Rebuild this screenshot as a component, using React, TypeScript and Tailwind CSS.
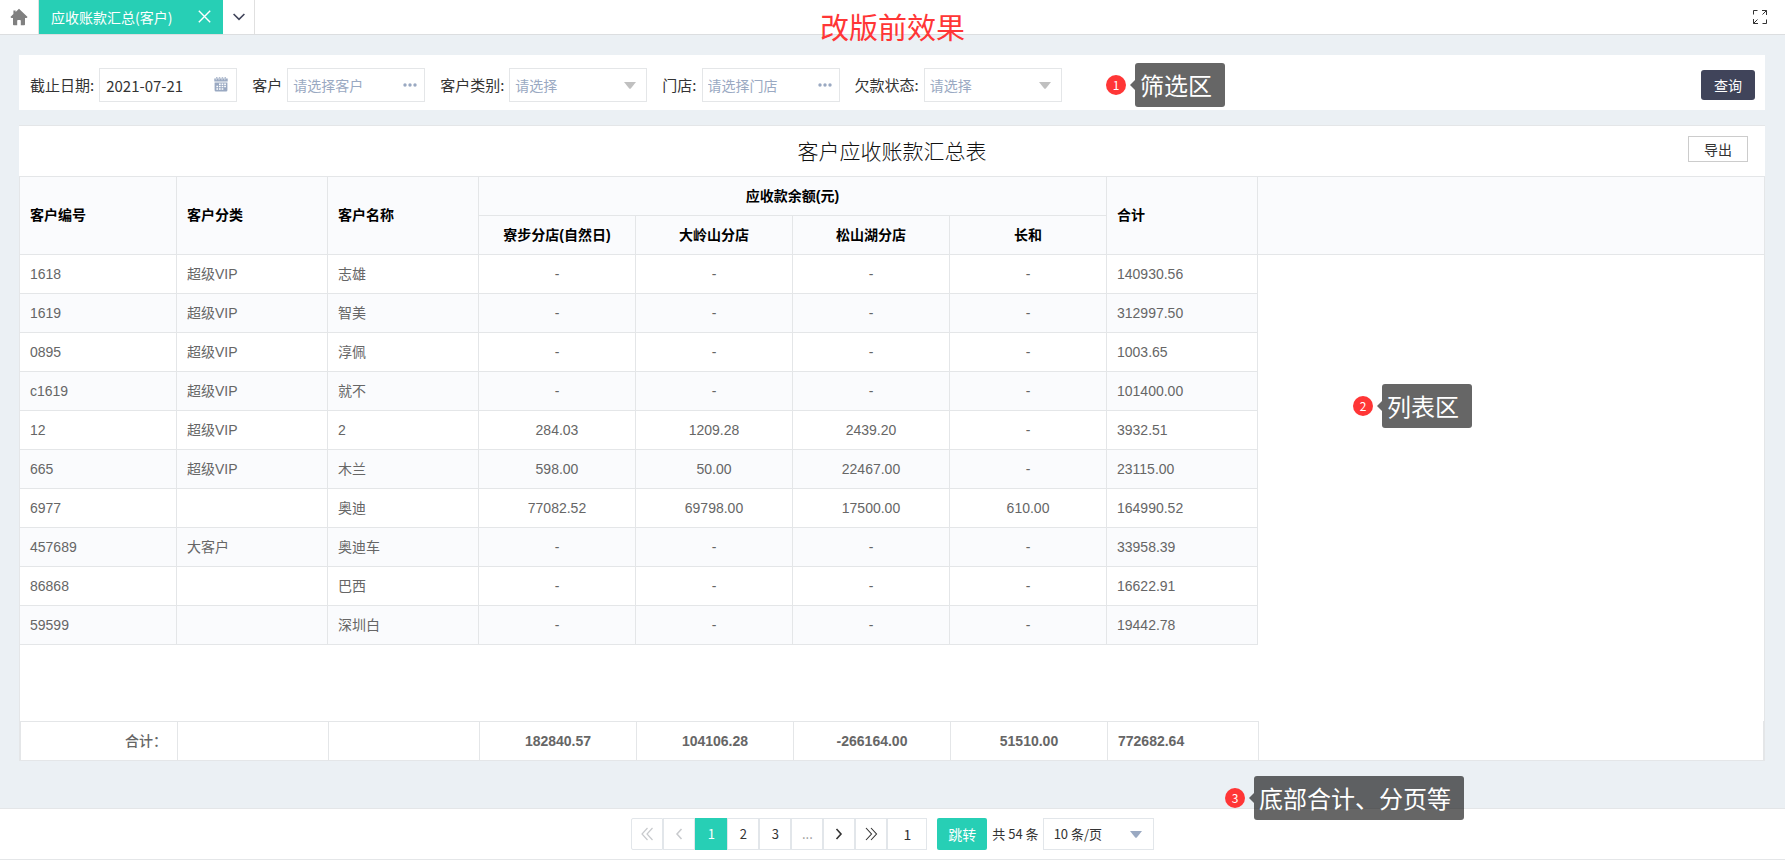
import { useState } from 'react';

type Row = {
    code: string;
    category: string;
    name: string;
    stores: string[];
    total: string;
};

const STORES = ['寮步分店(自然日)', '大岭山分店', '松山湖分店', '长和'];

const ROWS: Row[] = [
    { code: '1618', category: '超级VIP', name: '志雄', stores: ['-', '-', '-', '-'], total: '140930.56' },
    { code: '1619', category: '超级VIP', name: '智美', stores: ['-', '-', '-', '-'], total: '312997.50' },
    { code: '0895', category: '超级VIP', name: '淳佩', stores: ['-', '-', '-', '-'], total: '1003.65' },
    { code: 'c1619', category: '超级VIP', name: '就不', stores: ['-', '-', '-', '-'], total: '101400.00' },
    { code: '12', category: '超级VIP', name: '2', stores: ['284.03', '1209.28', '2439.20', '-'], total: '3932.51' },
    { code: '665', category: '超级VIP', name: '木兰', stores: ['598.00', '50.00', '22467.00', '-'], total: '23115.00' },
    { code: '6977', category: '', name: '奥迪', stores: ['77082.52', '69798.00', '17500.00', '610.00'], total: '164990.52' },
    { code: '457689', category: '大客户', name: '奥迪车', stores: ['-', '-', '-', '-'], total: '33958.39' },
    { code: '86868', category: '', name: '巴西', stores: ['-', '-', '-', '-'], total: '16622.91' },
    { code: '59599', category: '', name: '深圳白', stores: ['-', '-', '-', '-'], total: '19442.78' },
];

const STORE_TOTALS = ['182840.57', '104106.28', '-266164.00', '51510.00'];

function HomeIcon() {
    return (
        <svg viewBox="0 0 18 18" className="h-[18px] w-[18px] fill-[#808080]">
            <path d="M9 .8 17.6 9l-1 1.1H15v6.3q0 .8-.8.8h-3.4v-4.4q0-.8-.8-.8H8q-.8 0-.8.8v4.4H3.8q-.8 0-.8-.8v-6.3H1.4L.4 9l3-2.9V2.6h2.2V4z" />
        </svg>
    );
}

function CalendarIcon() {
    return (
        <svg viewBox="0 0 14 15" className="pointer-events-none absolute top-[9px] right-[9px] h-[15px] w-[14px]">
            <path d="M.3 1.6h13.4v3H.3zM.6 5.4h12.8v7.8q0 1.3-1.3 1.3H1.9Q.6 14.5.6 13.2z" fill="#9aa9c2" />
            <path d="M2 .3h1.5v1.3H2zM4.8.3h1.5v1.3H4.8zM7.7.3h1.5v1.3H7.7zM10.5.3H12v1.3h-1.5z" fill="#9aa9c2" />
            <path d="M2.2 1.6v1.6M5 1.6v1.6M8 1.6v1.6M10.8 1.6v1.6" stroke="#fff" strokeWidth=".6" />
            <path d="M5 6.4h1.7v1.5H5zM7.6 6.4h1.7v1.5H7.6zM10.2 6.4h1.7v1.5h-1.7zM2.4 8.8h1.7v1.5H2.4zM5 8.8h1.7v1.5H5zM7.6 8.8h1.7v1.5H7.6zM10.2 8.8h1.7v1.5h-1.7zM2.4 11.2h1.7v1.5H2.4zM5 11.2h1.7v1.5H5zM7.6 11.2h1.7v1.5H7.6z" fill="#fff" />
        </svg>
    );
}

function DotsIcon() {
    return (
        <svg viewBox="0 0 14 4" className="pointer-events-none absolute top-[15px] right-2 h-1 w-[14px] fill-[#9aa9c2]">
            <circle cx="2" cy="2" r="1.7" />
            <circle cx="7" cy="2" r="1.7" />
            <circle cx="12" cy="2" r="1.7" />
        </svg>
    );
}

function CaretIcon({ className }: { className: string }) {
    return (
        <svg viewBox="0 0 12 7" className={`pointer-events-none absolute h-[7px] w-3 ${className}`}>
            <path d="M0 0h12L7 6.2q-1 1-2 0z" />
        </svg>
    );
}

function Chevrons({ d, width }: { d: string; width: number }) {
    return (
        <svg viewBox="0 0 14 14" className="h-[14px] w-[14px]" fill="none" stroke="currentColor" strokeWidth={width}>
            <path d={d} />
        </svg>
    );
}

function PickerField({ id, label, placeholder }: { id: string; label: string; placeholder: string }) {
    return (
        <div className="flex items-center gap-[5px]">
            <label htmlFor={id}>{label}</label>
            <div className="relative">
                <input
                    id={id}
                    placeholder={placeholder}
                    className="block h-[34px] w-[138px] border border-[#e4e6e8] bg-white pr-6 pl-[5px] text-sm outline-none placeholder:text-[#9aa9c2]"
                />
                <DotsIcon />
            </div>
        </div>
    );
}

function SelectField({ id, label }: { id: string; label: string }) {
    return (
        <div className="flex items-center gap-[5px]">
            <label htmlFor={id}>{label}</label>
            <div className="relative">
                <select
                    id={id}
                    className="block h-[34px] w-[138px] appearance-none border border-[#e4e6e8] bg-white pr-6 pl-[5px] text-sm text-[#9aa9c2] outline-none"
                >
                    <option>请选择</option>
                </select>
                <CaretIcon className="top-[14px] right-[11px] fill-[#c0c0c0]" />
            </div>
        </div>
    );
}

function Columns() {
    return (
        <colgroup>
            <col className="w-[157px]" />
            <col className="w-[151px]" />
            <col className="w-[151px]" />
            {STORES.map((s) => (
                <col key={s} className="w-[157px]" />
            ))}
            <col className="w-[151px]" />
            <col />
        </colgroup>
    );
}

function Callout({ n, text, className }: { n: number; text: string; className: string }) {
    return (
        <div className={`absolute flex items-center ${className}`}>
            <span className="flex h-5 w-5 items-center justify-center rounded-full bg-[#ff3636] text-xs text-white">{n}</span>
            <svg viewBox="0 0 5 10" className="ml-1 h-[10px] w-[5px] fill-black/60">
                <path d="M5 0v10L0 5z" />
            </svg>
            <span className="flex h-11 items-center rounded-[3px] bg-black/60 pr-[13px] pb-px pl-[5px] text-2xl whitespace-nowrap text-white">
                {text}
            </span>
        </div>
    );
}

const th = 'h-[39px] border-r border-b border-[#e4e6e8] bg-[#fafbfd] px-[10px] pb-px font-bold text-black';
const td = 'h-[39px] border-r border-b border-[#e4e6e8] px-[10px] pb-px';
const tf = 'h-[39px] border-t border-r border-[#e4e6e8] px-[10px] pb-px';
const pageBtn = 'flex h-8 w-8 items-center justify-center border border-[#e2e6ea]';

export default function App() {
    const [date, setDate] = useState('2021-07-21');
    const [page, setPage] = useState(1);
    const [jump, setJump] = useState('1');

    return (
        <div className="relative flex min-h-screen flex-col bg-[#ebf0f4] font-['Noto_Sans_CJK_SC',sans-serif] text-sm text-[#333]">
            <header className="flex h-[35px] border-b border-[#dcdee0] bg-white">
                <button aria-label="首页" className="flex w-[39px] items-center justify-center border-r border-[#e0e0e0]">
                    <HomeIcon />
                </button>
                <div className="flex w-[184px] items-center justify-between bg-[#27cfb5] pr-3 pb-px pl-3 text-white">
                    <span>应收账款汇总(客户)</span>
                    <button aria-label="关闭">
                        <svg viewBox="0 0 13 13" className="h-[13px] w-[13px]" stroke="currentColor" strokeWidth="1.4">
                            <path d="m.8.8 11.4 11.4M12.2.8.8 12.2" />
                        </svg>
                    </button>
                </div>
                <button aria-label="更多标签" className="flex w-8 items-center justify-center border-r border-[#e0e0e0]">
                    <svg viewBox="0 0 12 8" className="h-2 w-3" fill="none" stroke="#40445a" strokeWidth="1.6">
                        <path d="m.6 1 5.4 5.4L11.4 1" />
                    </svg>
                </button>
                <button aria-label="全屏" className="mr-[18px] ml-auto">
                    <svg viewBox="0 0 14 14" className="h-[14px] w-[14px]" fill="none" stroke="#333">
                        <path d="M.5 4.5v-4h4M9 .5h4.5V5M13.5.5 9.5 4.5M13.5 9.5v4h-4M.5 9v4.5H5M.5 13.5l4-4" />
                    </svg>
                </button>
            </header>

            <form
                onSubmit={(e) => e.preventDefault()}
                className="mt-5 mr-5 ml-[19px] flex h-[55px] items-center gap-[15px] bg-white pt-[5px] pr-[10px] pl-[11px] text-[15px]"
            >
                <div className="flex items-center gap-[5px]">
                    <label htmlFor="deadline">截止日期:</label>
                    <div className="relative">
                        <input
                            id="deadline"
                            value={date}
                            onChange={(e) => setDate(e.target.value)}
                            className="block h-[34px] w-[138px] border border-[#e4e6e8] bg-white pl-[6px] outline-none"
                        />
                        <CalendarIcon />
                    </div>
                </div>
                <PickerField id="customer" label="客户" placeholder="请选择客户" />
                <SelectField id="category" label="客户类别:" />
                <PickerField id="store" label="门店:" placeholder="请选择门店" />
                <SelectField id="status" label="欠款状态:" />
                <button className="ml-auto h-[30px] w-[54px] rounded-[3px] bg-[#40445a] text-sm text-white">查询</button>
            </form>

            <section className="mt-[15px] mr-5 mb-[47px] ml-[19px] flex flex-1 flex-col">
                <div className="grid h-[51px] grid-cols-[1fr_auto_1fr] items-center border-t border-[#e4e6e8] bg-white pb-[2px]">
                    <h1 className="col-start-2 text-[21px] font-light text-[#111]">客户应收账款汇总表</h1>
                    <button className="mr-[17px] mb-[2px] h-[26px] w-[60px] justify-self-end border border-[#ccc]">导出</button>
                </div>

                <div className="flex flex-1 flex-col border border-[#e4e6e8] bg-white font-['Liberation_Sans','Noto_Sans_CJK_SC',sans-serif] text-[#666]">
                    <table className="w-full table-fixed border-separate border-spacing-0">
                        <Columns />
                        <thead>
                            <tr>
                                <th rowSpan={2} className={`${th} text-left`}>客户编号</th>
                                <th rowSpan={2} className={`${th} text-left`}>客户分类</th>
                                <th rowSpan={2} className={`${th} text-left`}>客户名称</th>
                                <th colSpan={4} className={th}>应收款余额(元)</th>
                                <th rowSpan={2} className={`${th} text-left`}>合计</th>
                                <td rowSpan={2} className="border-b border-[#e4e6e8] bg-[#fafbfd]" />
                            </tr>
                            <tr>
                                {STORES.map((s) => (
                                    <th key={s} className={th}>{s}</th>
                                ))}
                            </tr>
                        </thead>
                        <tbody>
                            {ROWS.map((row, i) => {
                                const cell = i % 2 ? `${td} bg-[#fafbfd]` : td;
                                return (
                                    <tr key={row.code}>
                                        <td className={cell}>{row.code}</td>
                                        <td className={cell}>{row.category}</td>
                                        <td className={cell}>{row.name}</td>
                                        {row.stores.map((v, j) => (
                                            <td key={j} className={`${cell} text-center`}>{v}</td>
                                        ))}
                                        <td className={cell}>{row.total}</td>
                                    </tr>
                                );
                            })}
                        </tbody>
                    </table>

                    <div className="mt-auto border-x border-[#e4e6e8]">
                        <table className="w-full table-fixed border-separate border-spacing-0">
                            <Columns />
                            <tbody>
                                <tr className="font-bold">
                                    <td className={`${tf} text-right font-medium`}>合计：</td>
                                    <td className={tf} />
                                    <td className={tf} />
                                    {STORE_TOTALS.map((v) => (
                                        <td key={v} className={`${tf} text-center`}>{v}</td>
                                    ))}
                                    <td className={tf}>772682.64</td>
                                    <td />
                                </tr>
                            </tbody>
                        </table>
                    </div>
                </div>
            </section>

            <footer className="bg-white pb-px">
                <div className="flex h-[52px] items-center justify-center border-y border-[#e4e6e8] text-[13px]">
                    <nav className="flex" aria-label="分页">
                        <button aria-label="首页" className={`${pageBtn} rounded-l-[2px] text-[#c8cacd]`}>
                            <Chevrons d="M7.5 1 2 7l5.5 6M12.5 1 7 7l5.5 6" width={1.2} />
                        </button>
                        <button aria-label="上一页" className={`${pageBtn} text-[#c8cacd]`}>
                            <Chevrons d="M9.5 2 5 7l4.5 5" width={1.5} />
                        </button>
                        {[1, 2, 3].map((n) => (
                            <button
                                key={n}
                                onClick={() => setPage(n)}
                                className={n === page ? 'h-8 w-8 bg-[#27cfb5] text-white' : pageBtn}
                            >
                                {n}
                            </button>
                        ))}
                        <span className={`${pageBtn} text-[#999]`}>...</span>
                        <button aria-label="下一页" className={pageBtn}>
                            <Chevrons d="M4.5 2 9 7l-4.5 5" width={1.6} />
                        </button>
                        <button aria-label="末页" className={pageBtn}>
                            <Chevrons d="m2 1 5.5 6L2 13M7 1l5.5 6L7 13" width={1.1} />
                        </button>
                        <input
                            aria-label="页码"
                            value={jump}
                            onChange={(e) => setJump(e.target.value)}
                            className="h-8 w-10 border border-[#e2e6ea] text-center text-sm outline-none"
                        />
                    </nav>
                    <button className="ml-[10px] h-8 w-[50px] rounded-[2px] bg-[#27cfb5] text-sm text-white">跳转</button>
                    <span className="ml-[5px]">共 54 条</span>
                    <div className="relative ml-1">
                        <select
                            aria-label="每页条数"
                            className="block h-8 w-[111px] appearance-none border border-[#e2e6ea] bg-white pl-[10px] outline-none"
                        >
                            <option>10 条/页</option>
                        </select>
                        <CaretIcon className="top-[13px] right-3 fill-[#9aa9c2]" />
                    </div>
                </div>
            </footer>

            <p className="pointer-events-none absolute inset-x-0 top-1 text-center text-[29px] leading-[44px] text-[#ff3636]">
                改版前效果
            </p>
            <Callout n={1} text="筛选区" className="top-[63px] left-[1106px]" />
            <Callout n={2} text="列表区" className="top-[384px] left-[1353px]" />
            <Callout n={3} text="底部合计、分页等" className="top-[776px] left-[1225px]" />
        </div>
    );
}
